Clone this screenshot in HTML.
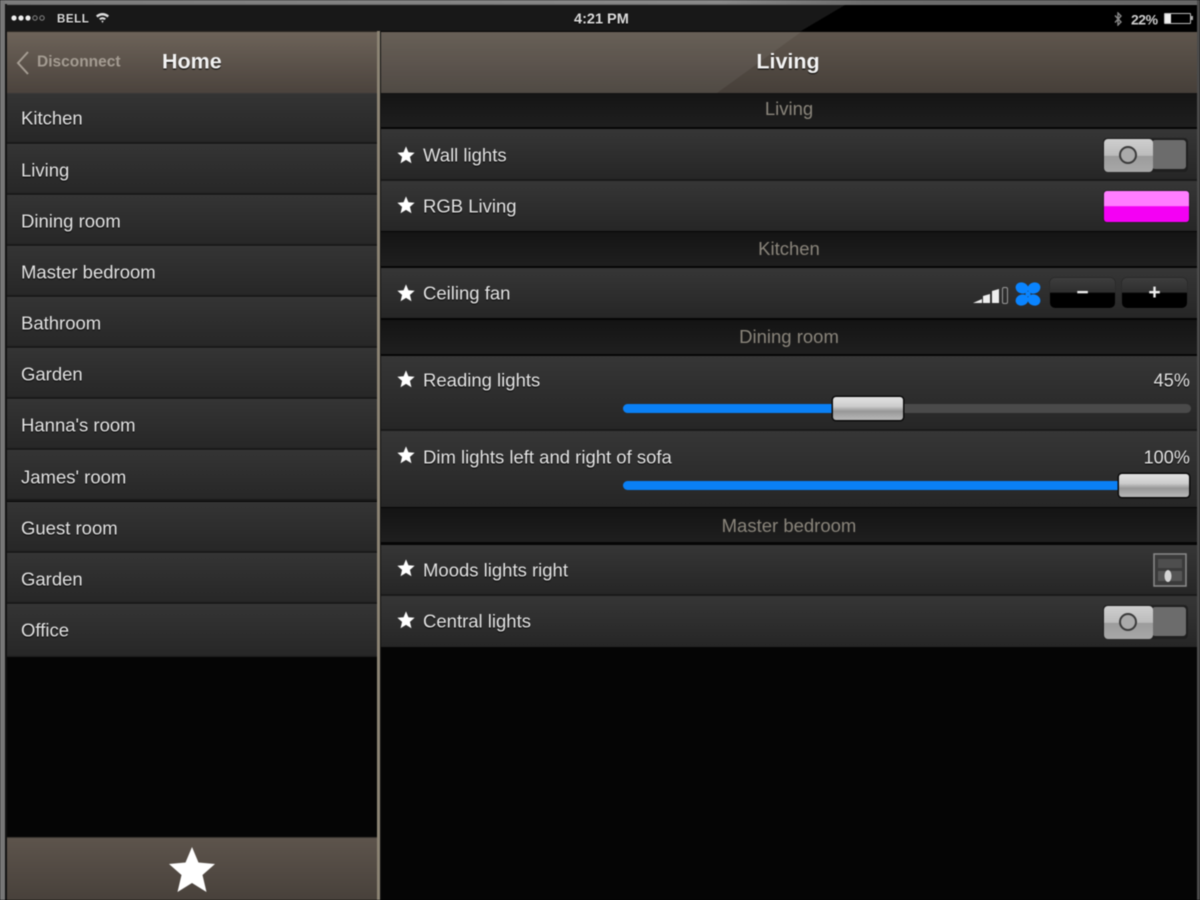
<!DOCTYPE html>
<html><head><meta charset="utf-8"><title>Living</title>
<style>
html,body{margin:0;padding:0;background:#000}
#p{position:relative;width:1200px;height:900px;overflow:hidden;background:#6e6e6e;font-family:"Liberation Sans",sans-serif;color:#e4e4e4;font-size:18.5px;filter:blur(.55px)}
#p div,#p svg{position:absolute}
.t{white-space:nowrap;line-height:22px;text-shadow:0 1px 1px #000;transform:translateY(.5px)}
.row{left:7px;width:370px;height:48px;background:linear-gradient(#343434,#272727);border-top:1px solid #383838;border-bottom:2px solid #1a1a1a}
.rr{left:381px;width:816px;background:linear-gradient(#363636,#262626)}
.sec{left:381px;width:816px;height:34px;background:linear-gradient(#141414,#1f1f1f);text-align:center;line-height:34px;color:#8a857b;border-bottom:2px solid #060606}
.sep{left:381px;width:816px;height:2px;background:#1a1a1a}
.sw{left:1103px;width:85px;height:34px;border-radius:4px;background:#1f1f1f}
.sw i{position:absolute;left:49px;top:2px;width:34px;height:29px;background:#6c6c6c;border-radius:3px}
.sw b{position:absolute;left:1px;top:1px;width:49px;height:33px;border-radius:4px;background:linear-gradient(#cfcfcf 0,#bcbcbc 50%,#9c9c9c 52%,#a8a8a8 100%)}
.sw u{position:absolute;left:16px;top:8px;width:14px;height:14px;border:2px solid #3a3a3a;border-radius:50%;background:#aaa}
.btn{top:278px;width:65px;height:30px;border-radius:5px;background:linear-gradient(#3d3d3d 0,#2e2e2e 48%,#000 50%,#000 100%);box-shadow:0 0 0 1px #2b2b2b;text-align:center;color:#eee;font-weight:bold;font-size:21px;line-height:29px}
.tr{left:623px;height:9px;border-radius:5px}
.th{width:70px;height:23px;border-radius:3px;background:linear-gradient(#e2e2e2 0,#cdcdcd 40%,#989898 62%,#b8b8b8 100%);box-shadow:0 0 0 1.5px #0a0a0a}
</style></head><body><div id="p">

<!-- frame -->
<div style="left:0;top:0;width:1200px;height:4px;background:linear-gradient(90deg,#7c7c7c,#8a8a8a 60%,#6d6d6d 72%,#666)"></div>
<div style="left:0;top:0;width:5px;height:900px;background:#777"></div>
<div style="left:5px;top:4px;width:2px;height:896px;background:#111"></div>
<div style="left:1197px;top:0;width:3px;height:900px;background:#4a4a4a"></div>

<!-- status bar -->
<div style="left:6px;top:5px;width:1191px;height:26px;background:#000"></div>
<svg style="left:6px;top:5px" width="850" height="26"><polygon points="0,0 839,0 795,26 0,26" fill="#181818"/></svg>
<svg style="left:10px;top:13px" width="44" height="10"><circle cx="4" cy="5" r="2.600" fill="#eee"/><circle cx="11" cy="5" r="2.600" fill="#eee"/><circle cx="18" cy="5" r="2.600" fill="#eee"/><circle cx="25" cy="5" r="2.200" fill="none" stroke="#888"/><circle cx="32" cy="5" r="2.200" fill="none" stroke="#888"/></svg>
<div class="t" style="left:57px;top:8px;font-size:11.500px;font-weight:bold;color:#ddd;letter-spacing:.6px">BELL</div>
<svg style="left:95px;top:12px" width="15" height="12"><path d="M1 3.500Q7.500-1.500 14 3.500L12.500 5.500Q7.500 1.500 2.500 5.500ZM4 6.500Q7.500 3.800 11 6.500L9.600 8Q7.500 6.400 5.400 8ZM6.300 9Q7.500 8.200 8.700 9L7.500 11Z" fill="#ddd"/></svg>
<div class="t" style="left:574px;top:8px;font-size:14.500px;font-weight:bold;color:#ddd">4:21 PM</div>
<svg style="left:1113px;top:12px" width="10" height="14"><path d="M2 3.500L8 10L5 13V1L8 4L2 10.500" fill="none" stroke="#888" stroke-width="1.400"/></svg>
<div class="t" style="left:1131px;top:8px;font-size:14px;font-weight:bold;color:#ccc;letter-spacing:-.5px">22%</div>
<div style="left:1164px;top:13px;width:25px;height:9px;border:1px solid #bbb;border-radius:1px"></div>
<div style="left:1165px;top:14px;width:6px;height:9px;background:#eee"></div>
<div style="left:1191px;top:16px;width:2px;height:4px;background:#aaa"></div>

<!-- divider and backgrounds -->
<div style="left:7px;top:31px;width:1190px;height:869px;background:#050505"></div>
<div style="left:377px;top:31px;width:3px;height:869px;background:#8c8474"></div>
<div style="left:380px;top:31px;width:1px;height:869px;background:#111"></div>

<!-- left header -->
<div style="left:7px;top:32px;width:370px;height:61px;background:linear-gradient(#6d6359,#4b433d)"></div>
<div style="left:7px;top:31px;width:370px;height:1px;background:#2a2622"></div>
<svg style="left:14px;top:50px" width="18" height="26"><path d="M14 2L4 13L14 24" fill="none" stroke="#a59d93" stroke-width="2"/></svg>
<div class="t" style="left:37px;top:51px;font-size:15.500px;font-weight:bold;color:#a49c92;text-shadow:none">Disconnect</div>
<div class="t" style="left:162px;top:50px;font-size:21.500px;font-weight:bold;color:#f2f2f2">Home</div>

<!-- left list -->
<div class="row" style="top:93px"></div>
<div class="t" style="left:21px;top:107px">Kitchen</div>
<div class="row" style="top:144px"></div>
<div class="t" style="left:21px;top:159px">Living</div>
<div class="row" style="top:195px"></div>
<div class="t" style="left:21px;top:210px">Dining room</div>
<div class="row" style="top:246px"></div>
<div class="t" style="left:21px;top:261px">Master bedroom</div>
<div class="row" style="top:297px"></div>
<div class="t" style="left:21px;top:312px">Bathroom</div>
<div class="row" style="top:348px"></div>
<div class="t" style="left:21px;top:363px">Garden</div>
<div class="row" style="top:399px"></div>
<div class="t" style="left:21px;top:414px">Hanna's room</div>
<div class="row" style="top:450px"></div>
<div class="t" style="left:21px;top:466px">James' room</div>
<div class="row" style="top:502px"></div>
<div class="t" style="left:21px;top:517px">Guest room</div>
<div class="row" style="top:553px"></div>
<div class="t" style="left:21px;top:568px">Garden</div>
<div class="row" style="top:604px;height:51px;border-bottom:1px solid #1c1c1c"></div>
<div class="t" style="left:21px;top:619px">Office</div>

<!-- left footer -->
<div style="left:7px;top:838px;width:370px;height:62px;background:linear-gradient(#5d544c,#48413b)"></div>
<div style="left:7px;top:837px;width:370px;height:1px;background:#3a3530"></div>
<svg style="left:168px;top:846px" width="48" height="48" viewBox="0 0 48 48"><polygon points="24,1 30.500,16.500 47,18 34.500,29 38.500,46 24,37 9.500,46 13.500,29 1,18 17.500,16.500" fill="#fff"/></svg>

<!-- right header -->
<div style="left:381px;top:32px;width:816px;height:61px;background:linear-gradient(#5f564d,#463f39)"></div>
<svg style="left:381px;top:32px" width="816" height="61"><polygon points="0,0 420,0 336,61 0,61" fill="#fff" opacity=".06"/></svg>
<div class="t" style="left:380px;width:816px;top:50px;text-align:center;font-size:21.500px;font-weight:bold;color:#f4f4f4">Living</div>

<!-- right sections -->
<div class="sec" style="top:93px;line-height:32px">Living</div>

<div class="rr" style="top:129px;height:50px"></div><div class="sep" style="top:179px"></div>
<svg style="left:397px;top:146px" width="18" height="18" viewBox="0 0 48 48"><polygon points="24,1 30.500,16.500 47,18 34.500,29 38.500,46 24,37 9.500,46 13.500,29 1,18 17.500,16.500" fill="#fff"/></svg>
<div class="t" style="left:423px;top:144px">Wall lights</div>
<div class="sw" style="top:138px"><i></i><b></b><u></u></div>

<div class="rr" style="top:181px;height:50px"></div>
<svg style="left:397px;top:196px" width="18" height="18" viewBox="0 0 48 48"><polygon points="24,1 30.500,16.500 47,18 34.500,29 38.500,46 24,37 9.500,46 13.500,29 1,18 17.500,16.500" fill="#fff"/></svg>
<div class="t" style="left:423px;top:195px">RGB Living</div>
<div style="left:1104px;top:191px;width:85px;height:31px;border-radius:3px;background:linear-gradient(#ff7dff 0,#ff7dff 48%,#f400f4 50%,#f400f4 100%);box-shadow:0 0 0 1px #222"></div>

<div class="sec" style="top:232px">Kitchen</div>

<div class="rr" style="top:268px;height:50px"></div>
<svg style="left:397px;top:284px" width="18" height="18" viewBox="0 0 48 48"><polygon points="24,1 30.500,16.500 47,18 34.500,29 38.500,46 24,37 9.500,46 13.500,29 1,18 17.500,16.500" fill="#fff"/></svg>
<div class="t" style="left:423px;top:282px">Ceiling fan</div>
<svg style="left:973px;top:285px" width="36" height="21"><polygon points="0,18 9,14 9,18" fill="#eee"/><polygon points="10,18 10,11 17,9 17,18" fill="#eee"/><polygon points="19,18 19,6 26,4 26,18" fill="#eee"/><rect x="29.500" y="2.500" width="5" height="16" rx="1.500" fill="none" stroke="#999"/></svg>
<svg style="left:1015px;top:282px" width="26" height="24"><g fill="#0a84ff"><ellipse cx="7" cy="6" rx="6.500" ry="5.500" transform="rotate(20 7 6)"/><ellipse cx="19" cy="6" rx="6.500" ry="5.500" transform="rotate(-20 19 6)"/><ellipse cx="7" cy="18" rx="6.500" ry="5.500" transform="rotate(-20 7 18)"/><ellipse cx="19" cy="18" rx="6.500" ry="5.500" transform="rotate(20 19 18)"/></g><circle cx="13" cy="12" r="2.500" fill="#0a84ff"/></svg>
<div class="btn" style="left:1050px">−</div>
<div class="btn" style="left:1122px">+</div>

<div class="sec" style="top:320px">Dining room</div>

<div class="rr" style="top:356px;height:73px"></div><div class="sep" style="top:429px"></div>
<svg style="left:397px;top:370px" width="18" height="18" viewBox="0 0 48 48"><polygon points="24,1 30.500,16.500 47,18 34.500,29 38.500,46 24,37 9.500,46 13.500,29 1,18 17.500,16.500" fill="#fff"/></svg>
<div class="t" style="left:423px;top:369px">Reading lights</div>
<div class="t" style="right:10px;top:369px;font-size:18px;letter-spacing:.1px">45%</div>
<div class="tr" style="top:404px;width:568px;background:#4a4a4a"></div>
<div class="tr" style="top:404px;width:215px;background:#0a80f5"></div>
<div class="th" style="left:833px;top:397px"></div>

<div class="rr" style="top:431px;height:76px"></div>
<svg style="left:397px;top:446px" width="18" height="18" viewBox="0 0 48 48"><polygon points="24,1 30.500,16.500 47,18 34.500,29 38.500,46 24,37 9.500,46 13.500,29 1,18 17.500,16.500" fill="#fff"/></svg>
<div class="t" style="left:423px;top:446px">Dim lights left and right of sofa</div>
<div class="t" style="right:10px;top:446px;font-size:18px;letter-spacing:.1px">100%</div>
<div class="tr" style="top:481px;width:500px;background:#0a80f5"></div>
<div class="th" style="left:1119px;top:474px"></div>

<div class="sec" style="top:508px;line-height:36px">Master bedroom</div>

<div class="rr" style="top:545px;height:49px"></div><div class="sep" style="top:594px"></div>
<svg style="left:397px;top:559px" width="18" height="18" viewBox="0 0 48 48"><polygon points="24,1 30.500,16.500 47,18 34.500,29 38.500,46 24,37 9.500,46 13.500,29 1,18 17.500,16.500" fill="#fff"/></svg>
<div class="t" style="left:423px;top:559px">Moods lights right</div>
<svg style="left:1153px;top:553px" width="34" height="34"><rect x="1" y="1" width="32" height="32" fill="#3a3a3a" stroke="#8a8a8a" stroke-width="1.500"/><rect x="5" y="6" width="24" height="9" fill="#4e4e4e"/><rect x="5" y="18" width="24" height="10" fill="#555"/><ellipse cx="15" cy="23" rx="3.500" ry="6" fill="#d5d5d5"/></svg>

<div class="rr" style="top:596px;height:51px"></div>
<svg style="left:397px;top:611px" width="18" height="18" viewBox="0 0 48 48"><polygon points="24,1 30.500,16.500 47,18 34.500,29 38.500,46 24,37 9.500,46 13.500,29 1,18 17.500,16.500" fill="#fff"/></svg>
<div class="t" style="left:423px;top:610px">Central lights</div>
<div class="sw" style="top:605px"><i></i><b></b><u></u></div>

</div></body></html>
